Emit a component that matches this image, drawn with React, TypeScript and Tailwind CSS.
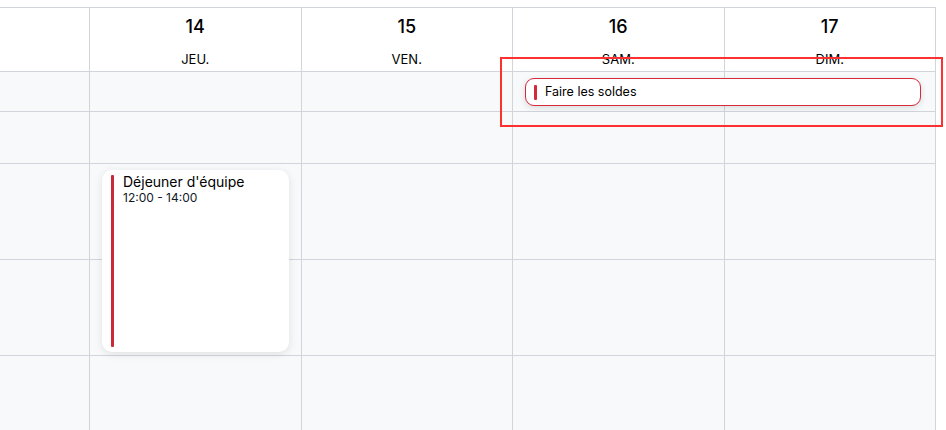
import React from "react";

const days = [
  { n: "13", d: "MER." },
  { n: "14", d: "JEU." },
  { n: "15", d: "VEN." },
  { n: "16", d: "SAM." },
  { n: "17", d: "DIM." },
];

const rowHeights = ["h-[52px]", "h-[96px]", "h-[96px]", "flex-1"];

export default function App() {
  return (
    <div className="relative w-[946px] h-[430px] overflow-hidden bg-white font-['Inter',sans-serif] text-[#0b0f19]">
      <div className="mt-[7px] w-[936px] border-t border-r border-[#d1d5db] flex flex-col h-[423px]">
        {/* header */}
        <div className="grid grid-cols-[89px_repeat(4,minmax(0,1fr))] h-[64px] border-b border-[#d1d5db] bg-white">
          {days.map((day, i) => (
            <div
              key={day.n}
              className={`flex flex-col items-center pt-[7px] ${i === 0 ? "invisible" : "border-l border-[#d1d5db]"}`}
            >
              <div className="text-[18px] leading-[24px] font-medium text-black">{day.n}</div>
              <div className="mt-[12px] text-[13px] leading-[16px] text-black">{day.d}</div>
            </div>
          ))}
        </div>
        {/* all-day row */}
        <div className="grid grid-cols-[89px_repeat(4,minmax(0,1fr))] h-[40px] border-b border-[#d1d5db] bg-[#f8f9fb]">
          <div className="row-start-1 col-start-1" />
          <div className="row-start-1 col-start-2 border-l border-[#d1d5db]" />
          <div className="row-start-1 col-start-3 border-l border-[#d1d5db]" />
          <div className="row-start-1 col-start-4 border-l border-[#d1d5db]" />
          <div className="row-start-1 col-start-5 border-l border-[#d1d5db]" />
          <div className="row-start-1 col-start-4 col-span-2 ml-[13px] mr-[14px] mt-[6px] h-[28px] rounded-[9px] border border-[#d42a3c] bg-white shadow-[0_2px_6px_rgba(0,0,0,0.12)] flex items-center pl-[8px]">
            <div className="w-[3px] h-[15px] rounded-[1px] bg-[#d42a3c]" />
            <span className="ml-[8px] text-[12.5px] leading-[16px] text-black">Faire les soldes</span>
          </div>
        </div>
        {/* time grid */}
        <div className="flex-1 grid grid-cols-[89px_repeat(4,minmax(0,1fr))] bg-[#f8f9fb]">
          {days.map((day, i) => (
            <div
              key={day.n}
              className={`relative flex flex-col ${i === 0 ? "" : "border-l border-[#d1d5db]"}`}
            >
              {rowHeights.map((h, j) => (
                <div key={j} className={`${h} ${j < 3 ? "border-b border-[#d1d5db]" : ""}`} />
              ))}
              {i === 1 && (
                <div className="absolute left-[12px] top-[58px] w-[187px] h-[182px] rounded-[10px] bg-white shadow-[0_2px_8px_rgba(0,0,0,0.10)] flex pl-[9px] py-[5px]">
                  <div className="w-[3px] h-full bg-[#c92a3a] rounded-[1px]" />
                  <div className="ml-[9px] -mt-[2px] flex flex-col">
                    <span className="text-[14px] leading-[17px] text-black">Déjeuner d'équipe</span>
                    <span className="text-[12px] leading-[15px] text-[#111827]">12:00 - 14:00</span>
                  </div>
                </div>
              )}
            </div>
          ))}
        </div>
      </div>
      {/* annotation highlight */}
      <div className="absolute left-[500px] top-[57px] w-[443px] h-[70px] border-2 border-[#ff3030] pointer-events-none" />
    </div>
  );
}
